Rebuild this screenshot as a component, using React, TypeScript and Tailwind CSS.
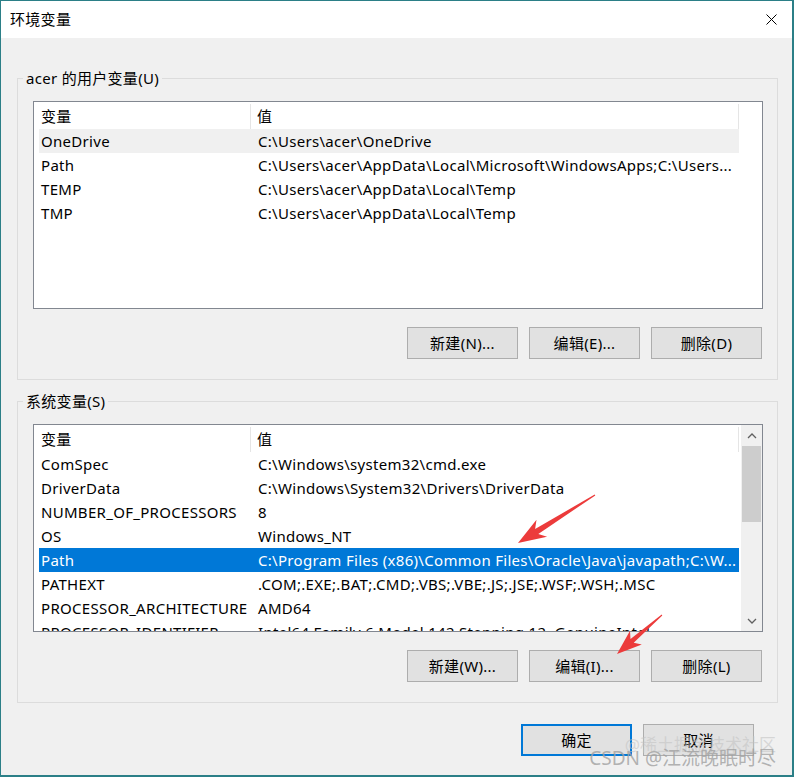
import React from "react";

type Row = { name: string; value: string; selected?: boolean; hover?: boolean };

const userVars: Row[] = [
  { name: "OneDrive", value: "C:\\Users\\acer\\OneDrive", hover: true },
  { name: "Path", value: "C:\\Users\\acer\\AppData\\Local\\Microsoft\\WindowsApps;C:\\Users..." },
  { name: "TEMP", value: "C:\\Users\\acer\\AppData\\Local\\Temp" },
  { name: "TMP", value: "C:\\Users\\acer\\AppData\\Local\\Temp" },
];

const systemVars: Row[] = [
  { name: "ComSpec", value: "C:\\Windows\\system32\\cmd.exe" },
  { name: "DriverData", value: "C:\\Windows\\System32\\Drivers\\DriverData" },
  { name: "NUMBER_OF_PROCESSORS", value: "8" },
  { name: "OS", value: "Windows_NT" },
  {
    name: "Path",
    value: "C:\\Program Files (x86)\\Common Files\\Oracle\\Java\\javapath;C:\\W...",
    selected: true,
  },
  { name: "PATHEXT", value: ".COM;.EXE;.BAT;.CMD;.VBS;.VBE;.JS;.JSE;.WSF;.WSH;.MSC" },
  { name: "PROCESSOR_ARCHITECTURE", value: "AMD64" },
  { name: "PROCESSOR_IDENTIFIER", value: "Intel64 Family 6 Model 142 Stepping 12, GenuineIntel" },
];

const ListView = ({ rows, scroll }: { rows: Row[]; scroll?: boolean }) => (
  <div className="relative w-[730px] h-[208px] border border-[#828790] bg-white overflow-hidden">
    {/* HEADER */}
    <div className="flex h-[27px] ml-[5px] w-[700px] pt-[2px] items-center">
      <div className="w-[212px] pl-[2px] h-full flex items-center border-r border-[#e5e5e5]">变量</div>
      <div className="flex-1 pl-[6px] h-full flex items-center border-r border-[#e5e5e5]">值</div>
    </div>

    {/* ROWS */}
    {rows.map((row, i) => (
      <div
        key={i}
        className={
          "flex h-[24px] ml-[5px] w-[700px] items-center whitespace-nowrap " +
          (row.selected ? "bg-[#0078d7] text-white" : row.hover ? "bg-[#f0f0f0]" : "")
        }
      >
        <div className="w-[212px] pl-[2px] overflow-hidden">{row.name}</div>
        <div className="flex-1 pl-[7px] overflow-hidden">{row.value}</div>
      </div>
    ))}

    {/* SCROLLBAR */}
    {scroll && (
      <div className="absolute top-0 right-0 w-[21px] h-full bg-[#f0f0f0] flex flex-col">
        <div className="h-[21px] flex items-center justify-center">
          <svg width="10" height="6" viewBox="0 0 10 6">
            <path d="M1 5 L5 1 L9 5" fill="none" stroke="#606060" strokeWidth="1.3" />
          </svg>
        </div>
        <div className="h-[76px] mx-[1px] bg-[#cdcdcd]" />
        <div className="flex-1" />
        <div className="h-[21px] flex items-center justify-center">
          <svg width="10" height="6" viewBox="0 0 10 6">
            <path d="M1 1 L5 5 L9 1" fill="none" stroke="#606060" strokeWidth="1.3" />
          </svg>
        </div>
      </div>
    )}
  </div>
);

const Button = ({ label, primary }: { label: string; primary?: boolean }) => (
  <button
    className={
      "w-[111px] h-[32px] bg-[#e1e1e1] text-black flex items-center justify-center " +
      (primary ? "border-2 border-[#0078d7]" : "border border-[#adadad]")
    }
  >
    {label}
  </button>
);

const GroupBox = ({
  title,
  rows,
  scroll,
  buttons,
}: {
  title: string;
  rows: Row[];
  scroll?: boolean;
  buttons: string[];
}) => (
  <div className="w-[761px] ml-[16px] border border-[#dcdcdc] pb-[20px]">
    <div className="-mt-[11px] ml-[5px] px-[3px] w-fit h-[20px] leading-[20px] bg-[#f0f0f0]">{title}</div>
    <div className="ml-[15px] mt-[13px]">
      <ListView rows={rows} scroll={scroll} />
      <div className="w-[730px] mt-[18px] pr-[1px] flex justify-end gap-[11px]">
        {buttons.map((b) => (
          <Button key={b} label={b} />
        ))}
      </div>
    </div>
  </div>
);

export default function App() {
  return (
    <div className="w-[794px] h-[777px] bg-[#2b7f87] pt-[1px] pl-[1px] font-['Noto_Sans','Noto_Sans_CJK_SC',sans-serif] text-[15px] tracking-[0.3px] text-black overflow-hidden">
      <div className="relative w-[791px] h-[774px] bg-[#f0f0f0] flex flex-col">
        {/* TITLE BAR */}
        <div className="h-[37px] bg-white flex items-center justify-between pl-[9px] pr-[15px]">
          <span>环境变量</span>
          <svg width="11" height="11" viewBox="0 0 11 11">
            <path d="M0.5 0.5 L10.5 10.5 M10.5 0.5 L0.5 10.5" stroke="#000" strokeWidth="1" />
          </svg>
        </div>

        {/* USER VARIABLES */}
        <div className="mt-[40px]">
          <GroupBox title="acer 的用户变量(U)" rows={userVars} buttons={["新建(N)...", "编辑(E)...", "删除(D)"]} />
        </div>

        {/* SYSTEM VARIABLES */}
        <div className="mt-[21px]">
          <GroupBox
            title="系统变量(S)"
            rows={systemVars}
            scroll
            buttons={["新建(W)...", "编辑(I)...", "删除(L)"]}
          />
        </div>

        {/* OK / CANCEL */}
        <div className="mt-[21px] flex justify-end gap-[11px] pr-[38px]">
          <Button label="确定" primary />
          <Button label="取消" />
        </div>

        {/* WATERMARK */}
        <div className="absolute right-[16px] bottom-[22px] text-[17px] tracking-normal text-[#c4c4c4]/60 leading-none">
          @稀土掘金技术社区
        </div>
        <div className="absolute right-[16px] bottom-[7px] text-[19px] tracking-normal text-[#a0a0a0]/80 leading-none">
          CSDN @江流晚眠时尽
        </div>
      </div>

      {/* RED ARROWS */}
      <svg className="absolute top-0 left-0 pointer-events-none" width="794" height="777" viewBox="0 0 794 777">
        <polygon
          points="595.3,495.4 538.3,533.9 547.1,536.7 518,543 536.5,519.7 535.1,528.9 594.7,494.6"
          fill="#ec3b3b"
        />
        <polygon
          points="662.3,615.4 633.7,642.8 641.8,644.4 617,654 630,630.8 630.5,639 661.7,614.6"
          fill="#ec3b3b"
        />
      </svg>
    </div>
  );
}
